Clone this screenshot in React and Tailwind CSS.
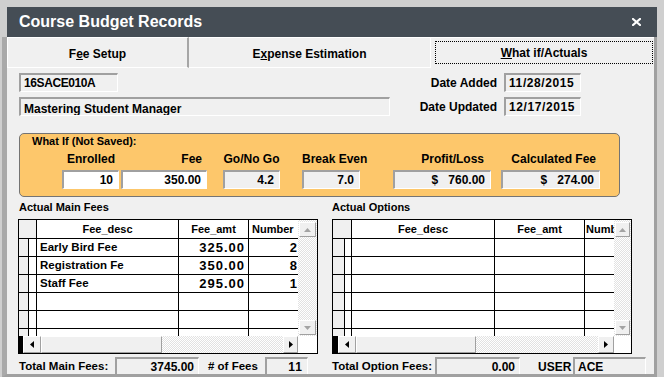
import React from "react";
import clsx from "clsx";

const sunken =
  "border-t-2 border-l-2 border-t-[#a0a0a0] border-l-[#a0a0a0] border-b border-r border-b-white border-r-white";
const raised =
  "bg-[#f0f0f0] border border-t-white border-l-white border-b-[#a0a0a0] border-r-[#a0a0a0]";
const track =
  "bg-[repeating-conic-gradient(#e2e2e2_0%_25%,#ffffff_0%_50%)] bg-[length:2px_2px]";

function Field({ className, children }) {
  return (
    <div
      className={clsx(
        "h-[19px] flex items-center overflow-hidden whitespace-nowrap text-[12px] text-black",
        sunken,
        className
      )}
    >
      {children}
    </div>
  );
}

function Arrow({ dir, color = "#000" }) {
  const pts = {
    up: "0,4 3.5,0 7,4",
    down: "0,0 7,0 3.5,4",
    left: "4,0 4,7 0,3.5",
    right: "0,0 0,7 4,3.5",
  };
  const flat = dir === "up" || dir === "down";
  const w = flat ? 7 : 4;
  const h = flat ? 4 : 7;
  return (
    <svg width={w} height={h} viewBox={`0 0 ${w} ${h}`}>
      <polygon points={pts[dir]} fill={color} />
    </svg>
  );
}

function DataGrid({ g, rows }) {
  const all = [...rows];
  while (all.length < 6) all.push([]);
  return (
    <div className="w-[300px] h-[135px] border border-black bg-white flex flex-col">
      <div className="flex h-[116px]">
        <div className="flex-1 overflow-hidden text-[11px]">
          <div className="flex h-[19px] border-b border-black">
            <div className={clsx(g.head, "bg-[#f0f0f0] border-r border-black")} />
            <div className={clsx(g.desc, "border-r border-black flex items-center justify-center")}>
              Fee_desc
            </div>
            <div className={clsx(g.amt, "border-r border-black flex items-center justify-center")}>
              Fee_amt
            </div>
            <div className={clsx("flex-1 min-w-0 flex items-center overflow-hidden whitespace-nowrap", g.numPad)}>
              Number
            </div>
          </div>
          {all.map((r, i) => (
            <div key={i} className="flex h-[18px] border-b border-black">
              <div className={clsx(g.sel, "bg-[#f0f0f0] border-r border-black")} />
              <div className={clsx(g.narrow, "border-r border-black")} />
              <div className={clsx(g.desc, "border-r border-black pl-[3px] flex items-center whitespace-nowrap overflow-hidden text-[11.5px]")}>
                {r[0]}
              </div>
              <div className={clsx(g.amt, "border-r border-black pr-[3px] flex items-center justify-end text-[13px] tracking-[1px]")}>
                {r[1]}
              </div>
              <div className="flex-1 pr-[1px] flex items-center justify-end text-[13px]">{r[2]}</div>
            </div>
          ))}
        </div>
        <div className={clsx(g.vs, track, "flex flex-col justify-between pt-[2px] pb-[1px] px-[1px]")}>
          <div className={clsx(raised, "h-[15px] flex items-center justify-center")}>
            <Arrow dir="up" color="#a3a3a3" />
          </div>
          <div className={clsx(raised, "h-[15px] flex items-center justify-center")}>
            <Arrow dir="down" color="#a3a3a3" />
          </div>
        </div>
      </div>
      <div className="flex h-[17px]">
        <div className={clsx(g.black, "bg-black")} />
        <div className={clsx(g.lbtn, raised, "flex items-center justify-center")}>
          <Arrow dir="left" />
        </div>
        <div className={clsx(g.thumb, raised)} />
        <div className={clsx("flex-1", track)} />
        <div className={clsx(g.rbtn, raised, "flex items-center justify-center")}>
          <Arrow dir="right" />
        </div>
        <div className={clsx(g.vs, "bg-white")} />
      </div>
    </div>
  );
}

const leftGrid = {
  head: "w-[18px]",
  sel: "w-[10px]",
  narrow: "w-[8px]",
  desc: "w-[142px]",
  amt: "w-[70px]",
  numPad: "pl-[3px]",
  vs: "w-[19px]",
  black: "w-[4px]",
  lbtn: "w-[18px]",
  thumb: "w-[121px]",
  rbtn: "w-[15px]",
};

const rightGrid = {
  head: "w-[19px]",
  sel: "w-[12px]",
  narrow: "w-[7px]",
  desc: "w-[143px]",
  amt: "w-[90px]",
  numPad: "pl-[1px]",
  vs: "w-[17px]",
  black: "w-[5px]",
  lbtn: "w-[18px]",
  thumb: "w-[120px]",
  rbtn: "w-[16px]",
};

const whatIf = [
  { label: "Enrolled", value: "10", w: "w-[57px]", ml: "", lab: "text-right pr-[4px]", white: true },
  { label: "Fee", value: "350.00", w: "w-[86px]", ml: "ml-[2px]", lab: "text-right pr-[5px]", white: true },
  { label: "Go/No Go", value: "4.2", w: "w-[57px]", ml: "ml-[16px]", lab: "text-center" },
  { label: "Break Even", value: "7.0", w: "w-[58px]", ml: "ml-[22px]", lab: "text-center" },
  { label: "Profit/Loss", value: "$   760.00", w: "w-[98px]", ml: "ml-[33px]", lab: "text-right pr-[7px]" },
  { label: "Calculated Fee", value: "$   274.00", w: "w-[99px]", ml: "ml-[10px]", lab: "text-right pr-[4px]" },
];

export default function App() {
  return (
    <div className="w-[664px] h-[377px] bg-[#cfcfcf] pt-[7px] pl-[2px] pr-[7px] flex flex-col overflow-hidden font-['Liberation_Sans',Arial,sans-serif] font-bold text-black">
      <div className="ml-[5px] h-[30px] shrink-0 bg-[#454d55] flex items-center justify-between pl-[12px] pr-[16px] text-white text-[16px]">
        <span>Course Budget Records</span>
        <svg width="9" height="8" viewBox="0 0 9 8">
          <path d="M1 1 L8 7 M8 1 L1 7" stroke="#fff" strokeWidth="2.2" strokeLinecap="square" />
        </svg>
      </div>

      <div className="flex-1 min-h-0 flex flex-col overflow-hidden bg-[#f0f0f0] border-l-[5px] border-l-[#a9a9a9] border-r-[3px] border-r-[#a0a0a0] border-b-[3px] border-b-[#a0a0a0]">
        {/* tabs */}
        <div className="flex h-[31px] shrink-0 text-[12px]">
          <div className="w-[182px] border-t border-l border-b border-t-white border-l-white border-b-white border-r-2 border-r-[#a6a6a6] flex items-center justify-center pt-[3px]">
            <span>F<u>e</u>e Setup</span>
          </div>
          <div className="w-[241px] border-t border-b border-t-white border-b-white flex items-center justify-center pt-[3px]">
            <span>E<u>x</u>pense Estimation</span>
          </div>
          <div className="flex-1 border-t border-l border-t-white border-l-white pt-[3px] pl-[4px] pr-[1px]">
            <div className="h-[23px] border border-dotted border-black flex items-center justify-center">
              <span><u>W</u>hat if/Actuals</span>
            </div>
          </div>
        </div>

        <div className="flex flex-col pl-[12px]">
          <div className="mt-[5px] w-[562px] flex items-center">
            <Field className="w-[99px] pl-[3px] tracking-[-0.4px]">16SACE010A</Field>
            <div className="ml-auto flex items-center gap-[7px]">
              <span className="text-[12px]">Date Added</span>
              <Field className="w-[77px] pl-[3px] tracking-[0.6px]">11/28/2015</Field>
            </div>
          </div>
          <div className="mt-[5px] w-[562px] flex items-center">
            <Field className="w-[371px] pl-[3px] items-start pt-[3px] leading-[14px]">Mastering Student Manager</Field>
            <div className="ml-auto flex items-center gap-[7px]">
              <span className="text-[12px]">Date Updated</span>
              <Field className="w-[77px] pl-[3px] tracking-[0.6px]">12/17/2015</Field>
            </div>
          </div>

          {/* what if panel */}
          <div className="mt-[17px] w-[601px] h-[64px] bg-[#fdc76b] border border-[#747474] rounded-[5px] flex flex-col">
            <div className="pl-[12px] pt-[1px] h-[13px] leading-[13px] text-[11px]">What If (Not Saved):</div>
            <div className="flex pl-[42px] mt-[5px]">
              {whatIf.map((c) => (
                <div key={c.label} className={clsx("flex flex-col", c.w, c.ml)}>
                  <div className={clsx("h-[14px] leading-[14px] text-[12px] whitespace-nowrap", c.lab)}>
                    {c.label}
                  </div>
                  <Field
                    className={clsx(
                      "mt-[4px] justify-end pr-[5px] whitespace-pre",
                      c.white ? "bg-white" : "bg-[#f0f0f0]"
                    )}
                  >
                    {c.value}
                  </Field>
                </div>
              ))}
            </div>
          </div>

          {/* grids */}
          <div className="flex ml-[-1px] mt-[4px]">
            <div className="w-[300px] flex flex-col">
              <div className="ml-[1px] h-[13px] leading-[13px] text-[11px]">Actual Main Fees</div>
              <div className="mt-[5px]">
                <DataGrid
                  g={leftGrid}
                  rows={[
                    ["Early Bird Fee", "325.00", "2"],
                    ["Registration Fe", "350.00", "8"],
                    ["Staff Fee", "295.00", "1"],
                  ]}
                />
              </div>
              <div className="mt-[3px] ml-[1px] flex items-center text-[11.5px]">
                <span className="w-[96px]">Total Main Fees:</span>
                <Field className="w-[84px] justify-end pr-[4px]">3745.00</Field>
                <span className="ml-[9px] w-[57px]"># of Fees</span>
                <Field className="w-[43px] justify-end pr-[4px] tracking-[1px]">11</Field>
              </div>
            </div>

            <div className="ml-[14px] w-[315px] flex flex-col">
              <div className="h-[13px] leading-[13px] text-[11px]">Actual Options</div>
              <div className="mt-[5px]">
                <DataGrid g={rightGrid} rows={[]} />
              </div>
              <div className="mt-[3px] flex items-center text-[11.5px]">
                <span className="w-[103px] whitespace-nowrap">Total Option Fees:</span>
                <Field className="w-[85px] justify-end pr-[4px]">0.00</Field>
                <span className="ml-[18px] w-[35px] text-[12px]">USER</span>
                <Field className="w-[73px] pl-[3px]">ACE</Field>
              </div>
            </div>
          </div>
        </div>
      </div>
    </div>
  );
}
